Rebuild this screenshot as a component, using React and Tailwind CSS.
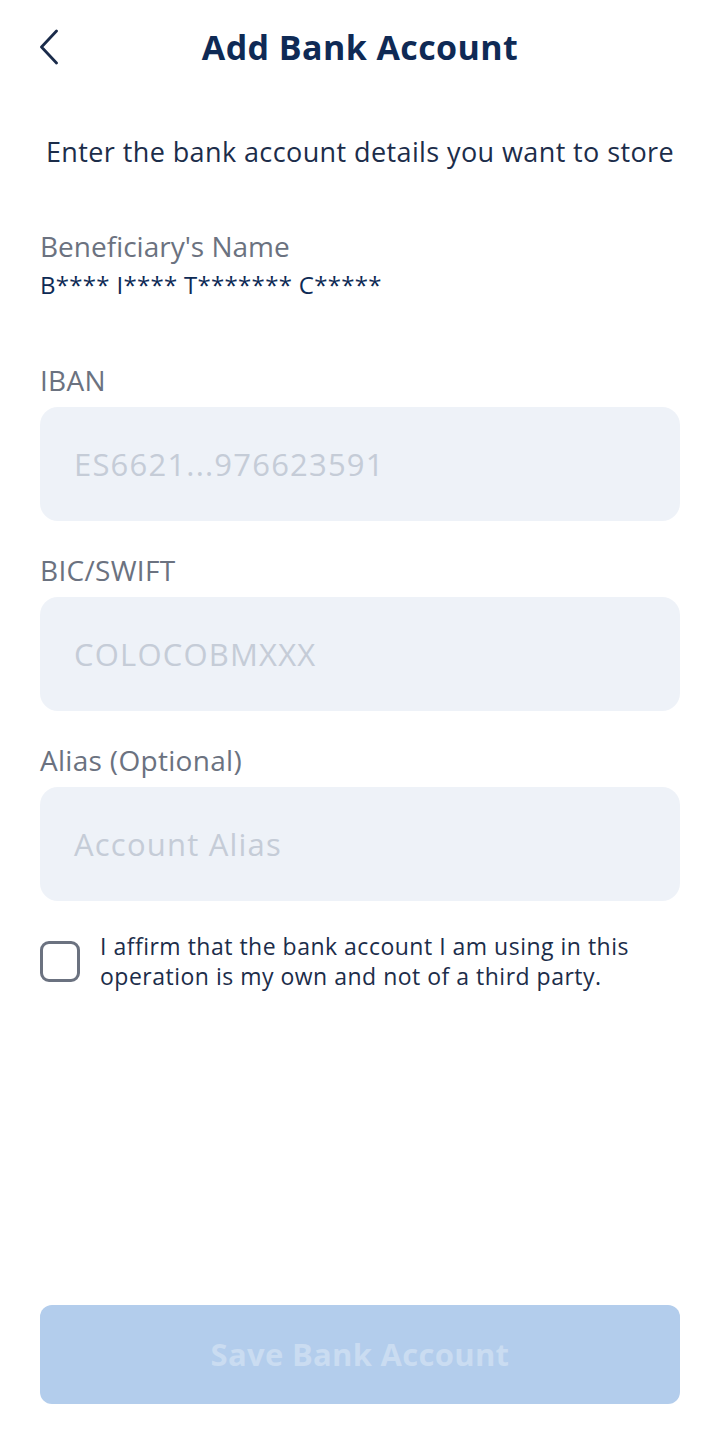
import React from "react";

const font = { fontFamily: "'Open Sans', 'Noto Sans', sans-serif" };

function Field({ label, placeholder, className }) {
  return (
    <div className={className}>
      <div className="text-[28px] leading-[34px] tracking-[0.3px] text-[#6b7280]">{label}</div>
      <div className="mt-[10px] h-[114px] rounded-[18px] bg-[#eef2f8] flex items-center pl-[34px]">
        <span className="text-[31px] tracking-[1.2px] text-[#c5ccd7]">{placeholder}</span>
      </div>
    </div>
  );
}

export default function App() {
  return (
    <div className="w-[720px] h-[1436px] bg-white flex flex-col px-10" style={font}>
      <div className="h-[94px] grid grid-cols-[1fr_auto_1fr] items-center">
        <svg width="18" height="36" viewBox="0 0 18 36" fill="none">
          <path d="M16.5 2 L1.5 18 L16.5 34" stroke="#1a2b4a" strokeWidth="2.8" strokeLinecap="round" strokeLinejoin="round" />
        </svg>
        <h1 className="text-[34px] font-bold tracking-[0.4px] text-[#0f2a55]">Add Bank Account</h1>
        <div />
      </div>
      <p className="mt-[40px] text-center text-[27px] leading-[36px] tracking-[0.4px] text-[#1c2d4a]">
        Enter the bank account details you want to store
      </p>
      <div className="mt-[59px] text-[28px] leading-[34px] text-[#6b7280]">Beneficiary's Name</div>
      <div className="mt-[7px] text-[24px] leading-[30px] tracking-[0.3px] text-[#0d2a55]">B**** I**** T******* C*****</div>
      <Field className="mt-[63px]" label="IBAN" placeholder="ES6621...976623591" />
      <Field className="mt-[32px]" label="BIC/SWIFT" placeholder="COLOCOBMXXX" />
      <Field className="mt-[32px]" label="Alias (Optional)" placeholder="Account Alias" />
      <div className="mt-[30px] flex gap-[20px]">
        <div className="mt-[10px] w-[40px] h-[41px] shrink-0 rounded-[9px] border-[3px] border-[#6b7280]" />
        <p className="text-[23px] leading-[30px] tracking-[0.5px] text-[#1c2d4a]">
          I affirm that the bank account I am using in this operation is my own and not of a third party.
        </p>
      </div>
      <div className="flex-1" />
      <button className="mb-[32px] h-[99px] w-full rounded-[12px] bg-[#b3cdec] text-[31px] font-bold tracking-[0.3px] text-[#cadcf1]">
        Save Bank Account
      </button>
    </div>
  );
}
